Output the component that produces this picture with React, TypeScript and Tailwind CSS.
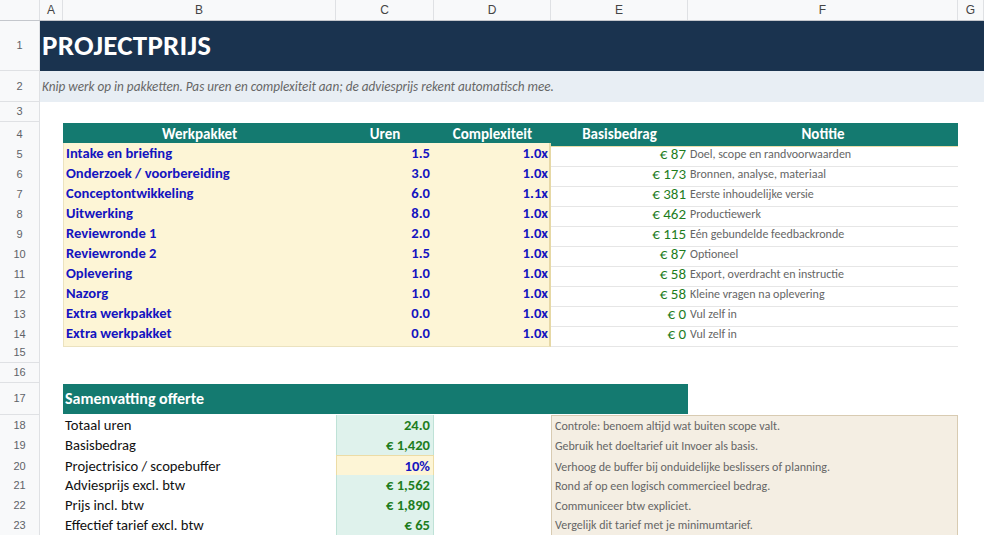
import React from "react";

const COLS = "grid grid-cols-[40px_23px_273px_98px_117px_137px_270px_26px]";
const FONT = { fontFamily: "Carlito, Lato, 'Open Sans', sans-serif" };

function RowNum({ n }: { n: number }) {
  return (
    <div className="flex items-center justify-center bg-[#f8f9fa] border-r border-b border-[#dfe1e4] text-[11px] text-[#5f6368] font-['Liberation_Sans',Arial,sans-serif]">
      {n}
    </div>
  );
}

const work = [
  ["Intake en briefing", "1.5", "1.0x", "€ 87", "Doel, scope en randvoorwaarden"],
  ["Onderzoek / voorbereiding", "3.0", "1.0x", "€ 173", "Bronnen, analyse, materiaal"],
  ["Conceptontwikkeling", "6.0", "1.1x", "€ 381", "Eerste inhoudelijke versie"],
  ["Uitwerking", "8.0", "1.0x", "€ 462", "Productiewerk"],
  ["Reviewronde 1", "2.0", "1.0x", "€ 115", "Eén gebundelde feedbackronde"],
  ["Reviewronde 2", "1.5", "1.0x", "€ 87", "Optioneel"],
  ["Oplevering", "1.0", "1.0x", "€ 58", "Export, overdracht en instructie"],
  ["Nazorg", "1.0", "1.0x", "€ 58", "Kleine vragen na oplevering"],
  ["Extra werkpakket", "0.0", "1.0x", "€ 0", "Vul zelf in"],
  ["Extra werkpakket", "0.0", "1.0x", "€ 0", "Vul zelf in"],
];

const summary = [
  ["Totaal uren", "24.0", "Controle: benoem altijd wat buiten scope valt."],
  ["Basisbedrag", "€ 1,420", "Gebruik het doeltarief uit Invoer als basis."],
  ["Projectrisico / scopebuffer", "10%", "Verhoog de buffer bij onduidelijke beslissers of planning."],
  ["Adviesprijs excl. btw", "€ 1,562", "Rond af op een logisch commercieel bedrag."],
  ["Prijs incl. btw", "€ 1,890", "Communiceer btw expliciet."],
  ["Effectief tarief excl. btw", "€ 65", "Vergelijk dit tarief met je minimumtarief."],
];

export default function App() {
  return (
    <div className="w-[984px] h-[535px] overflow-hidden bg-white" style={FONT}>
      {/* column header */}
      <div className={`${COLS} h-[21px] border-b border-[#c4c7cc] bg-[#f8f9fa] text-[12px] text-[#444] font-['Liberation_Sans',Arial,sans-serif]`}>
        <div className="border-r border-[#dfe1e4]" />
        {["A", "B", "C", "D", "E", "F", "G"].map((c) => (
          <div key={c} className="flex items-center justify-center border-r border-[#dfe1e4]">
            {c}
          </div>
        ))}
      </div>

      {/* row 1 */}
      <div className={`${COLS} h-[50px]`}>
        <RowNum n={1} />
        <div className="col-span-7 bg-[#1a334f] flex items-center pl-[2px] text-white font-bold text-[29px] tracking-[0.2px]">
          PROJECTPRIJS
        </div>
      </div>

      {/* row 2 */}
      <div className={`${COLS} h-[31px]`}>
        <RowNum n={2} />
        <div className="col-span-7 bg-[#e8eef4] flex items-center pl-[2px] italic text-[13.2px] text-[#666] whitespace-nowrap">
          Knip werk op in pakketten. Pas uren en complexiteit aan; de adviesprijs rekent automatisch mee.
        </div>
      </div>

      {/* row 3 */}
      <div className={`${COLS} h-[20px]`}>
        <RowNum n={3} />
        <div className="col-span-7" />
      </div>

      {/* row 4 header */}
      <div className={`${COLS} h-[21px]`}>
        <RowNum n={4} />
        <div />
        {["Werkpakket", "Uren", "Complexiteit", "Basisbedrag", "Notitie"].map((h) => (
          <div
            key={h}
            className="bg-[#147a70] border-b border-[#e9dca8] mt-[1px] flex items-center justify-center text-white font-bold text-[15px]"
          >
            {h}
          </div>
        ))}
        <div />
      </div>

      {/* rows 5-14 */}
      {work.map((r, i) => (
        <div key={i} className={`${COLS} h-[20px]`}>
          <RowNum n={5 + i} />
          <div />
          <div className="bg-[#fdf5d6] border-l border-b border-[#ebe2bf] flex items-center pl-[2px] text-[14.6px] font-bold text-[#1414c0] whitespace-nowrap">
            {r[0]}
          </div>
          <div className="bg-[#fdf5d6] border-b border-[#ebe2bf] flex items-center justify-end pr-[4px] text-[14.6px] font-bold text-[#1414c0]">
            {r[1]}
          </div>
          <div className="bg-[#fdf5d6] border-b border-r-2 border-b-[#ebe2bf] border-r-[#e6d8a6] flex items-center justify-end pr-[1px] text-[14.6px] font-bold text-[#1414c0]">
            {r[2]}
          </div>
          <div className="border-b border-[#e6e6e6] flex items-center justify-end pr-[2px] text-[15px] text-[#1e7d1e]">
            {r[3]}
          </div>
          <div className="border-b border-[#e6e6e6] flex items-center pl-[2px] text-[12px] text-[#666] whitespace-nowrap">
            {r[4]}
          </div>
          <div />
        </div>
      ))}

      {/* rows 15-16 */}
      {[15, 16].map((n) => (
        <div key={n} className={`${COLS} h-[20px]`}>
          <RowNum n={n} />
          <div className="col-span-7" />
        </div>
      ))}

      {/* row 17 */}
      <div className={`${COLS} h-[32px]`}>
        <RowNum n={17} />
        <div />
        <div className="col-span-4 bg-[#147a70] my-[1px] flex items-center pl-[2px] text-white font-bold text-[16px]">
          Samenvatting offerte
        </div>
        <div className="col-span-2" />
      </div>

      {/* rows 18-23 */}
      {summary.map((r, i) => {
        const isInput = i === 2;
        const last = i === summary.length - 1;
        return (
          <div key={i} className={`${COLS} h-[20px]`}>
            <RowNum n={18 + i} />
            <div />
            <div className="flex items-center pl-[2px] text-[14.6px] text-[#111] whitespace-nowrap">{r[0]}</div>
            <div
              className={
                isInput
                  ? "bg-[#fdf5d6] border border-[#ecdca6] flex items-center justify-end pr-[3px] text-[14.6px] font-bold text-[#1414c0]"
                  : "bg-[#dff2ec] border-x border-[#bfe2d7] flex items-center justify-end pr-[3px] text-[14.6px] font-bold text-[#1e7d1e]"
              }
            >
              {r[1]}
            </div>
            <div />
            <div
              className={
                i === 0
                  ? "col-span-2 bg-[#f4eee3] border-x border-t border-[#d8cbb2] flex items-center pl-[3px] text-[12px] text-[#666] whitespace-nowrap"
                  : last
                  ? "col-span-2 bg-[#f4eee3] border-x border-b border-[#d8cbb2] flex items-center pl-[3px] text-[12px] text-[#666] whitespace-nowrap"
                  : "col-span-2 bg-[#f4eee3] border-x border-[#d8cbb2] flex items-center pl-[3px] text-[12px] text-[#666] whitespace-nowrap"
              }
            >
              {r[2]}
            </div>
            <div />
          </div>
        );
      })}
    </div>
  );
}
